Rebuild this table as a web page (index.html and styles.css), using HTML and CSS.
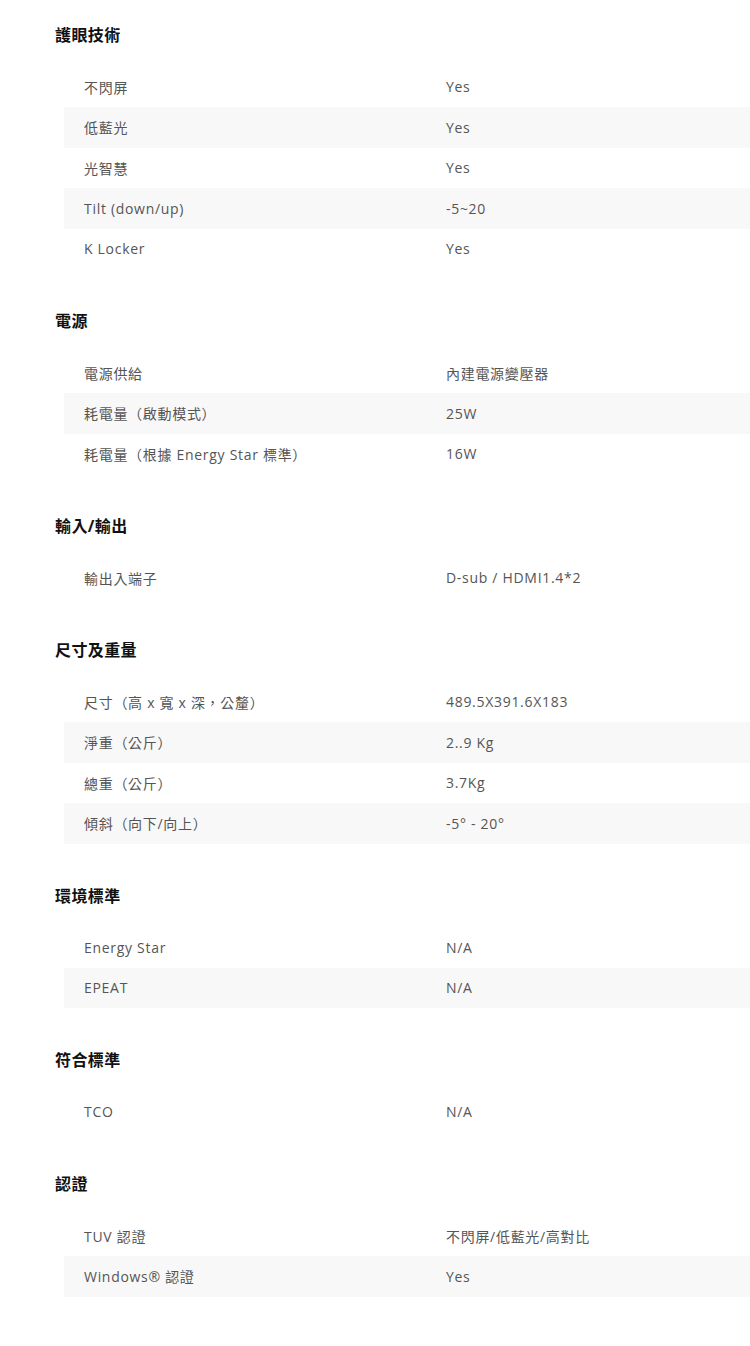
FILE: index.html
```html
<!DOCTYPE html>
<html lang="zh-Hant">
<head>
<meta charset="utf-8">
<link rel="stylesheet" href="styles.css">
</head>
<body>
<div class="spec">
  <section class="group">
    <h3 class="group-title">護眼技術</h3>
    <div class="rows">
      <div class="row"><span class="label">不閃屏</span><span class="value">Yes</span></div>
      <div class="row"><span class="label">低藍光</span><span class="value">Yes</span></div>
      <div class="row"><span class="label">光智慧</span><span class="value">Yes</span></div>
      <div class="row"><span class="label">Tilt (down/up)</span><span class="value">-5~20</span></div>
      <div class="row"><span class="label">K Locker</span><span class="value">Yes</span></div>
    </div>
  </section>
  <section class="group">
    <h3 class="group-title">電源</h3>
    <div class="rows">
      <div class="row"><span class="label">電源供給</span><span class="value">內建電源變壓器</span></div>
      <div class="row"><span class="label">耗電量（啟動模式）</span><span class="value">25W</span></div>
      <div class="row"><span class="label">耗電量（根據 Energy Star 標準）</span><span class="value">16W</span></div>
    </div>
  </section>
  <section class="group">
    <h3 class="group-title">輸入/輸出</h3>
    <div class="rows">
      <div class="row"><span class="label">輸出入端子</span><span class="value">D-sub / HDMI1.4*2</span></div>
    </div>
  </section>
  <section class="group">
    <h3 class="group-title">尺寸及重量</h3>
    <div class="rows">
      <div class="row"><span class="label">尺寸（高 x 寬 x 深，公釐）</span><span class="value">489.5X391.6X183</span></div>
      <div class="row"><span class="label">淨重（公斤）</span><span class="value">2..9 Kg</span></div>
      <div class="row"><span class="label">總重（公斤）</span><span class="value">3.7Kg</span></div>
      <div class="row"><span class="label">傾斜（向下/向上）</span><span class="value">-5° - 20°</span></div>
    </div>
  </section>
  <section class="group">
    <h3 class="group-title">環境標準</h3>
    <div class="rows">
      <div class="row"><span class="label">Energy Star</span><span class="value">N/A</span></div>
      <div class="row"><span class="label">EPEAT</span><span class="value">N/A</span></div>
    </div>
  </section>
  <section class="group">
    <h3 class="group-title">符合標準</h3>
    <div class="rows">
      <div class="row"><span class="label">TCO</span><span class="value">N/A</span></div>
    </div>
  </section>
  <section class="group">
    <h3 class="group-title">認證</h3>
    <div class="rows">
      <div class="row"><span class="label">TUV 認證</span><span class="value">不閃屏/低藍光/高對比</span></div>
      <div class="row"><span class="label">Windows® 認證</span><span class="value">Yes</span></div>
    </div>
  </section>
</div>
</body>
</html>
```
FILE: styles.css
```css
html, body {
  margin: 0;
  padding: 0;
  background: #fff;
  overflow: hidden;
}
body {
  font-family: "Open Sans", "Noto Sans CJK TC", sans-serif;
  color: #555;
  font-size: 14px;
}
.spec {
  padding: 23px 0 0 55px;
}
.group {
  margin-bottom: 40px;
}
.group-title {
  margin: 0 0 19.5px;
  font-size: 16px;
  line-height: 24px;
  font-weight: 700;
  color: #111;
  letter-spacing: 0.4px;
}
.rows {
  margin-left: 9px;
  width: 764px;
}
.row {
  display: flex;
  align-items: center;
  height: 40.5px;
  letter-spacing: 0.7px;
}
.row:nth-child(even) {
  background: #f8f8f8;
}
.label {
  width: 362px;
  padding-left: 20px;
  flex: none;
}
.value {
  flex: 1;
}
```
